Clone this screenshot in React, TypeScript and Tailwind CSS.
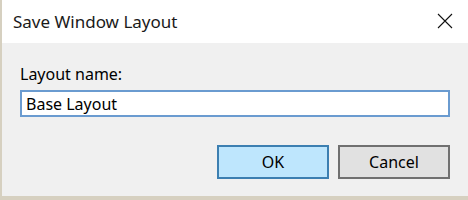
export default function App() {
  return (
    <div
      className="flex h-[200px] w-[468px] flex-col border-b-[4px] border-l-2 border-[#d6d0c0] bg-[#f0f0f0] text-[#000]"
      style={{ fontFamily: '"Noto Sans", "Open Sans", sans-serif' }}
    >
      <div className="flex h-[43px] items-center justify-between bg-white pl-[11px] pr-[15px]">
        <span className="text-[17px] text-[#1a1a1a]">Save Window Layout</span>
        <svg width="16" height="16" viewBox="0 0 16 16" className="mb-[1px]">
          <path d="M1 1 L15 15 M15 1 L1 15" stroke="#111" strokeWidth="1.1" fill="none" />
        </svg>
      </div>

      <div className="flex flex-1 flex-col px-[18px] pt-[21px]">
        <label className="text-[16px] leading-[21px]">Layout name:</label>
        <input
          defaultValue="Base Layout"
          className="mt-[5px] h-[27px] w-[430px] border-2 border-[#6a9bd0] bg-white px-[4px] text-[16px] outline-none"
        />

        <div className="mt-[28px] flex justify-end gap-[9px]">
          <button className="h-[34px] w-[112px] border-2 border-[#3c7fb1] bg-[#bee6fd] text-[16px]">
            OK
          </button>
          <button className="h-[34px] w-[112px] border-2 border-[#707070] bg-[#e1e1e1] text-[16px]">
            Cancel
          </button>
        </div>
      </div>
    </div>
  );
}
